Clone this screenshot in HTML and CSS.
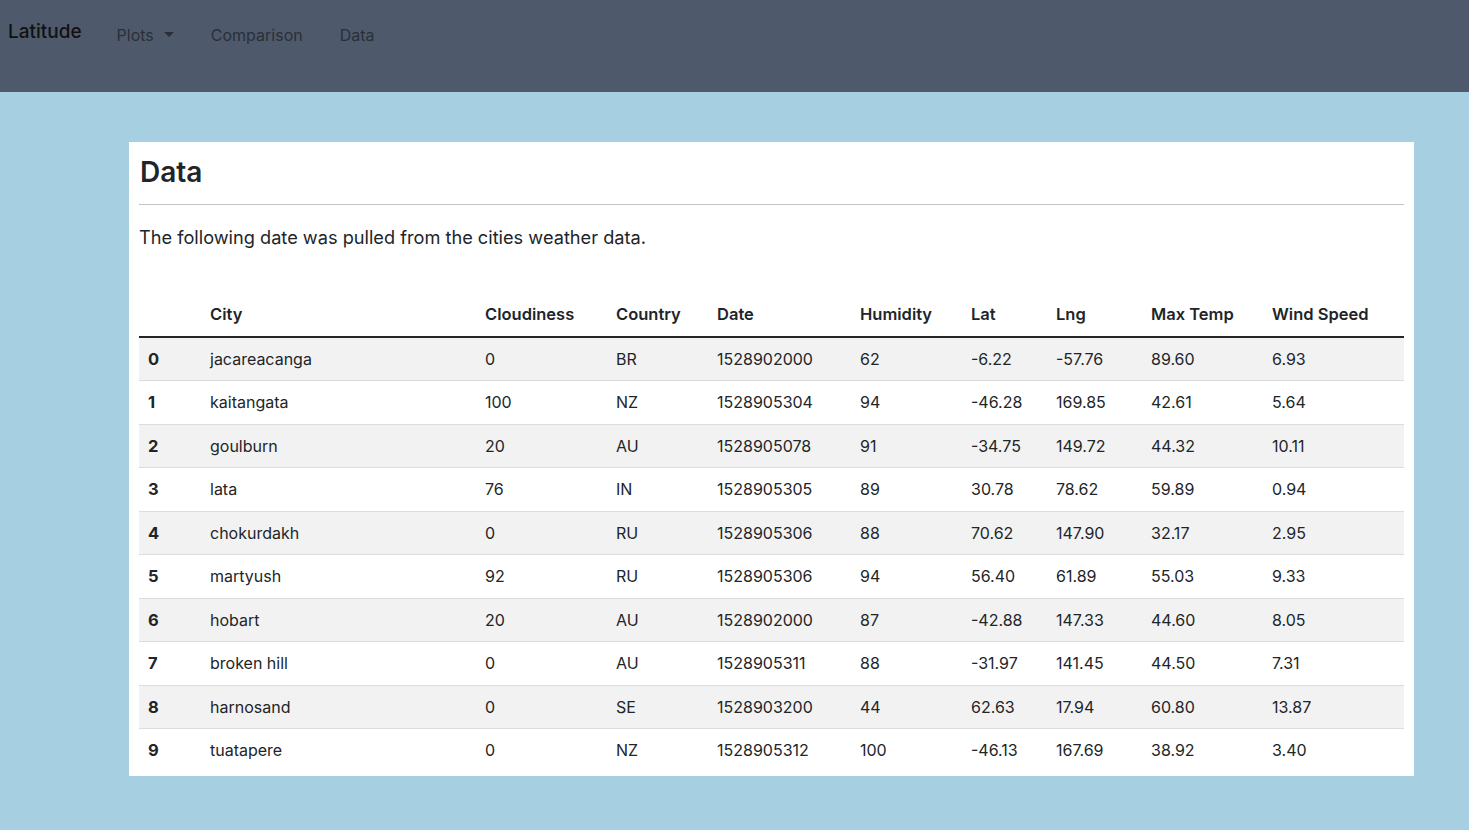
FILE: index.html
```html
<!DOCTYPE html>
<html>
<head>
<meta charset="utf-8">
<link rel="stylesheet" href="styles.css">
</head>
<body>
<nav class="navbar">
  <a class="brand">Latitude</a>
  <ul class="nav">
    <li class="nav-item">Plots <span class="caret"></span></li>
    <li class="nav-item">Comparison</li>
    <li class="nav-item">Data</li>
  </ul>
</nav>
<main class="main">
  <section class="card">
    <h1 class="title">Data</h1>
    <hr class="rule">
    <p class="lead">The following date was pulled from the cities weather data.</p>
    <table class="table">
      <colgroup>
        <col style="width:62px"><col style="width:275px"><col style="width:131px"><col style="width:101px"><col style="width:143px"><col style="width:111px"><col style="width:85px"><col style="width:95px"><col style="width:121px"><col style="width:141px">
      </colgroup>
      <thead>
        <tr><th></th><th>City</th><th>Cloudiness</th><th>Country</th><th>Date</th><th>Humidity</th><th>Lat</th><th>Lng</th><th>Max Temp</th><th>Wind Speed</th></tr>
      </thead>
      <tbody>
        <tr><th>0</th><td>jacareacanga</td><td>0</td><td>BR</td><td>1528902000</td><td>62</td><td>-6.22</td><td>-57.76</td><td>89.60</td><td>6.93</td></tr>
        <tr><th>1</th><td>kaitangata</td><td>100</td><td>NZ</td><td>1528905304</td><td>94</td><td>-46.28</td><td>169.85</td><td>42.61</td><td>5.64</td></tr>
        <tr><th>2</th><td>goulburn</td><td>20</td><td>AU</td><td>1528905078</td><td>91</td><td>-34.75</td><td>149.72</td><td>44.32</td><td>10.11</td></tr>
        <tr><th>3</th><td>lata</td><td>76</td><td>IN</td><td>1528905305</td><td>89</td><td>30.78</td><td>78.62</td><td>59.89</td><td>0.94</td></tr>
        <tr><th>4</th><td>chokurdakh</td><td>0</td><td>RU</td><td>1528905306</td><td>88</td><td>70.62</td><td>147.90</td><td>32.17</td><td>2.95</td></tr>
        <tr><th>5</th><td>martyush</td><td>92</td><td>RU</td><td>1528905306</td><td>94</td><td>56.40</td><td>61.89</td><td>55.03</td><td>9.33</td></tr>
        <tr><th>6</th><td>hobart</td><td>20</td><td>AU</td><td>1528902000</td><td>87</td><td>-42.88</td><td>147.33</td><td>44.60</td><td>8.05</td></tr>
        <tr><th>7</th><td>broken hill</td><td>0</td><td>AU</td><td>1528905311</td><td>88</td><td>-31.97</td><td>141.45</td><td>44.50</td><td>7.31</td></tr>
        <tr><th>8</th><td>harnosand</td><td>0</td><td>SE</td><td>1528903200</td><td>44</td><td>62.63</td><td>17.94</td><td>60.80</td><td>13.87</td></tr>
        <tr><th>9</th><td>tuatapere</td><td>0</td><td>NZ</td><td>1528905312</td><td>100</td><td>-46.13</td><td>167.69</td><td>38.92</td><td>3.40</td></tr>
      </tbody>
    </table>
  </section>
</main>
</body>
</html>
```
FILE: styles.css
```css
* { box-sizing: border-box; }
html, body { margin: 0; padding: 0; }
body {
  font-family: Inter, "Noto Sans", sans-serif;
  color: #212529;
  background: #a6cfe1;
  height: 830px;
}
.navbar {
  height: 92px;
  background: #4e5a6c;
  display: flex;
  align-items: flex-start;
  padding: 0 8px;
}
.brand {
  font-size: 19px;
  font-weight: 500;
  color: #111;
  margin-top: 20px;
  line-height: 24px;
  margin-right: 35px;
}
.nav {
  display: flex;
  list-style: none;
  margin: 0;
  padding: 0;
  margin-top: 23px;
}
.nav-item {
  font-size: 16px;
  line-height: 24px;
  color: #2a2f38;
  margin-right: 37px;
  display: flex;
  align-items: center;
}
.caret {
  display: inline-block;
  width: 0; height: 0;
  border-left: 5px solid transparent;
  border-right: 5px solid transparent;
  border-top: 5px solid #2a2f38;
  margin-left: 10px;
  margin-top: -2px;
}
.main {
  padding: 50px 55px 0 129px;
}
.card {
  background: #fff;
  width: 1285px;
  padding: 12px 10px 4px 10px;
}
.title {
  margin: 0;
  font-size: 28px;
  font-weight: 600;
  line-height: 36px;
  padding-left: 1px;
}
.rule {
  margin: 14px 0 0 0;
  border: 0;
  border-top: 1px solid #c4c4c4;
}
.lead {
  margin: 19px 0 0 0;
  font-size: 18.2px;
  line-height: 27px;
}
.table {
  margin-top: 42px;
  border-collapse: collapse;
  width: 1265px;
  table-layout: fixed;
  font-size: 16px;
}
.table th, .table td {
  text-align: left;
  padding: 9px 9px;
  line-height: 24.5px;
}
.table thead th {
  font-size: 16.5px;
  font-weight: 600;
  border-bottom: 2px solid #212529;
  padding-bottom: 9px;
}
.table tbody th { font-weight: 700; font-size: 16.5px; }
.table tbody tr + tr th, .table tbody tr + tr td {
  border-top: 1px solid #dcdcdc;
}
.table tbody tr:nth-child(odd) { background: #f2f2f2; }
```
